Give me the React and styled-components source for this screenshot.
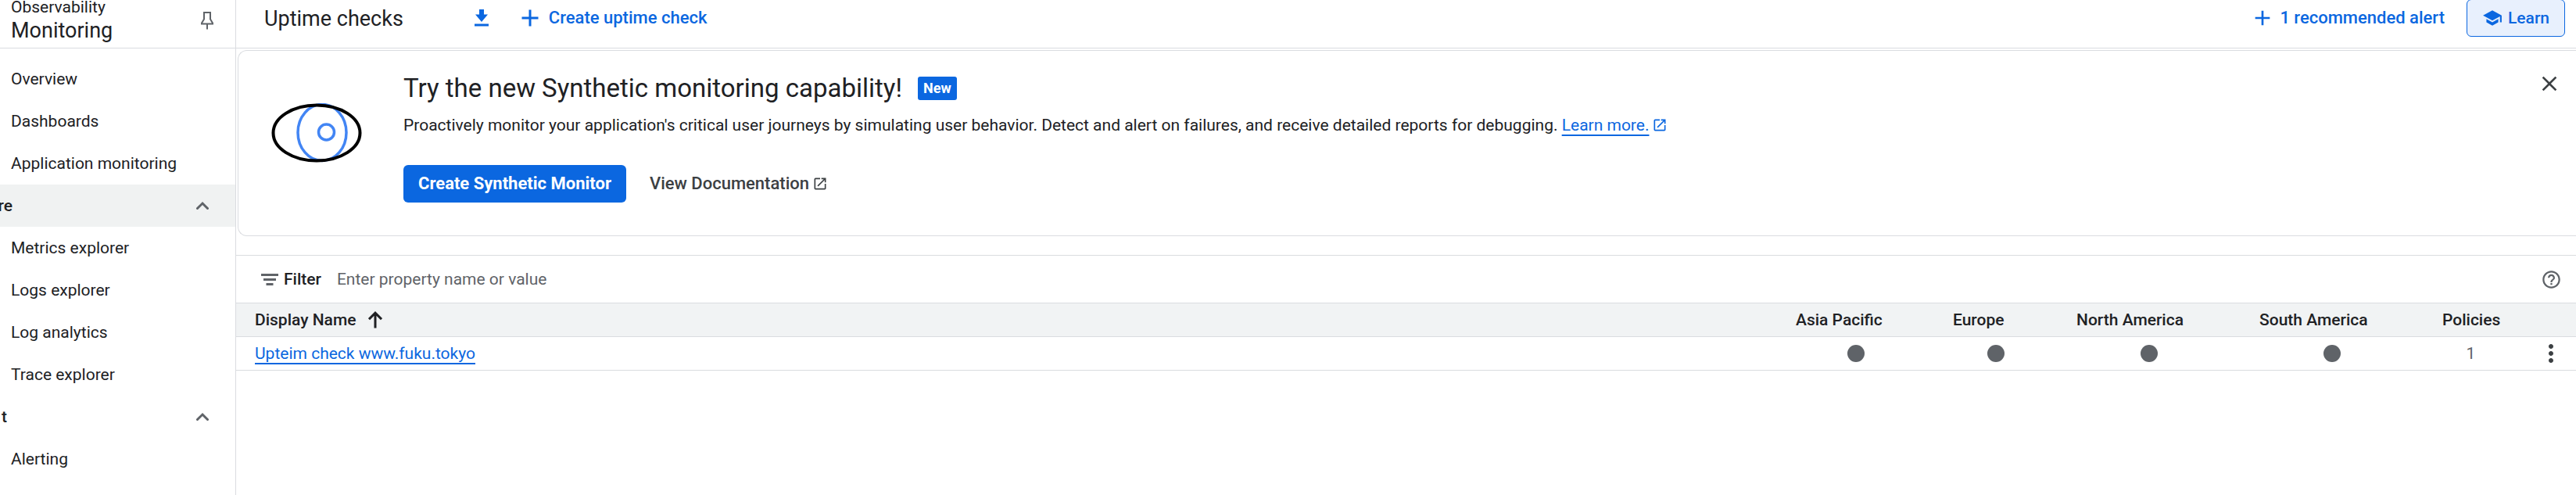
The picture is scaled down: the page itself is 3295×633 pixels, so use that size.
import React from "react";
import styled, { createGlobalStyle } from "styled-components";
import {
  MdAdd,
  MdClose,
  MdHelpOutline,
  MdMoreVert,
  MdOpenInNew,
  MdSchool,
} from "react-icons/md";

const blue = "#0b67e0";
const line = "#dadce0";
const ink = "#202124";
const grey = "#5f6368";

const navItems = [
  { label: "Overview" },
  { label: "Dashboards" },
  { label: "Application monitoring" },
  { label: "re", section: true, active: true, clip: 16 },
  { label: "Metrics explorer" },
  { label: "Logs explorer" },
  { label: "Log analytics" },
  { label: "Trace explorer" },
  { label: "t", section: true, clip: 9 },
  { label: "Alerting" },
];

const columns = [
  { label: "Asia Pacific", width: 201 },
  { label: "Europe", width: 158 },
  { label: "North America", width: 234 },
  { label: "South America", width: 234 },
];

const PinIcon = () => (
  <svg width="18" height="24" viewBox="0 0 18 24" fill="none" stroke={grey} strokeWidth="2">
    <path d="M4 2h10M5 2v8.5L2 15.5v1h14v-1L13 10.5V2M9 16.5v7" />
  </svg>
);

const ChevronUp = () => (
  <svg width="16" height="12" viewBox="0 0 16 12" fill="none" stroke={grey} strokeWidth="3">
    <path d="M1.5 9.5L8 3l6.5 6.5" strokeLinecap="round" />
  </svg>
);

const DownloadIcon = () => (
  <svg width="20" height="22" viewBox="0 0 20 22" fill={blue}>
    <path d="M7 0h6v6.500h5L10 16 2 6.500h5zM1 18.500h18V21.500H1z" />
  </svg>
);

const FilterIcon = () => (
  <svg width="22" height="15" viewBox="0 0 22 15" fill={grey}>
    <path d="M0 0h22v3H0zM3 6h16v3H3zM6.500 12h9v3h-9z" />
  </svg>
);

const ArrowUp = () => (
  <svg width="18" height="22" viewBox="0 0 18 22" fill="none" stroke={ink} strokeWidth="3">
    <path d="M9 21.500V2.500M1 10.200L9 2.200l8 8" />
  </svg>
);

const EyeArt = () => (
  <svg width="116" height="76" viewBox="0 0 116 76" fill="none">
    <ellipse cx="65" cy="37.500" rx="31" ry="36" stroke="#4285f4" strokeWidth="3.500" />
    <circle cx="70.500" cy="37" r="10" stroke="#4285f4" strokeWidth="3.500" />
    <ellipse cx="58" cy="38" rx="55.500" ry="35.500" stroke="#000" strokeWidth="4" />
  </svg>
);

const App = () => {
  return (
    <>
      <GlobalStyle />
      <Layout>
        <Sidebar>
          <SideHeader>
            <div>
              <Product>Observability</Product>
              <Service>Monitoring</Service>
            </div>
            <PlainButton type="button" aria-label="Pin navigation">
              <PinIcon />
            </PlainButton>
          </SideHeader>
          <NavList>
            {navItems.map((item) => (
              <li key={item.label}>
                {item.section ? (
                  <SectionButton type="button" $active={item.active}>
                    <SectionLabel $clip={item.clip}>{item.label}</SectionLabel>
                    <ChevronUp />
                  </SectionButton>
                ) : (
                  <NavLink href="#">{item.label}</NavLink>
                )}
              </li>
            ))}
          </NavList>
        </Sidebar>

        <Main>
          <TopBar>
            <PageTitle>Uptime checks</PageTitle>
            <PlainButton type="button" aria-label="Download">
              <DownloadIcon />
            </PlainButton>
            <ActionButton type="button">
              <MdAdd size={36} />
              Create uptime check
            </ActionButton>
            <Spacer />
            <ActionButton type="button">
              <MdAdd size={32} />1 recommended alert
            </ActionButton>
            <LearnButton type="button">
              <MdSchool size={26} />
              Learn
            </LearnButton>
          </TopBar>

          <Banner>
            <EyeArt />
            <BannerBody>
              <BannerTitle>
                Try the new Synthetic monitoring capability!
                <Badge>New</Badge>
              </BannerTitle>
              <BannerText>
                Proactively monitor your application's critical user journeys by
                simulating user behavior. Detect and alert on failures, and
                receive detailed reports for debugging.{" "}
                <TextLink href="#">Learn more.</TextLink>
                <MdOpenInNew size={20} color={blue} />
              </BannerText>
              <BannerActions>
                <PrimaryButton type="button">Create Synthetic Monitor</PrimaryButton>
                <DocLink href="#">
                  View Documentation
                  <MdOpenInNew size={20} />
                </DocLink>
              </BannerActions>
            </BannerBody>
            <PlainButton type="button" aria-label="Close">
              <MdClose size={32} />
            </PlainButton>
          </Banner>

          <FilterBar>
            <FilterIcon />
            <FilterLabel htmlFor="filter">Filter</FilterLabel>
            <FilterInput id="filter" placeholder="Enter property name or value" />
            <PlainButton type="button" aria-label="Help">
              <MdHelpOutline size={27} color={grey} />
            </PlainButton>
          </FilterBar>

          <Table>
            <colgroup>
              <col />
              {columns.map((col) => (
                <Col key={col.label} $width={col.width} />
              ))}
              <Col $width={121} />
              <Col $width={74} />
            </colgroup>
            <thead>
              <tr>
                <th>
                  <SortLabel>
                    Display Name
                    <ArrowUp />
                  </SortLabel>
                </th>
                {columns.map((col) => (
                  <th key={col.label}>{col.label}</th>
                ))}
                <th>Policies</th>
                <td />
              </tr>
            </thead>
            <tbody>
              <tr>
                <td>
                  <TextLink href="#">Upteim check www.fuku.tokyo</TextLink>
                </td>
                {columns.map((col) => (
                  <StatusCell key={col.label}>
                    <Dot />
                  </StatusCell>
                ))}
                <CountCell>1</CountCell>
                <MenuCell>
                  <PlainButton type="button" aria-label="More actions">
                    <MdMoreVert size={36} />
                  </PlainButton>
                </MenuCell>
              </tr>
            </tbody>
          </Table>
        </Main>
      </Layout>
    </>
  );
};

export default App;

const GlobalStyle = createGlobalStyle`
  * {
    box-sizing: border-box;
  }
  body {
    margin: 0;
    background: #fff;
    color: ${ink};
    font-family: Roboto, "Liberation Sans", sans-serif;
    font-size: 21px;
    line-height: 28px;
  }
  button, input {
    font: inherit;
    color: inherit;
  }
  svg {
    flex: none;
  }
`;

const Layout = styled.div`
  display: grid;
  grid-template-columns: 302px minmax(0, 1fr);
  min-height: 100vh;
`;

const Sidebar = styled.nav`
  border-right: 1px solid ${line};
`;

const SideHeader = styled.div`
  display: flex;
  align-items: flex-end;
  justify-content: space-between;
  height: 62px;
  padding: 0 27px 4px 14px;
  border-bottom: 1px solid ${line};

  button {
    padding-bottom: 19px;
  }
`;

const Product = styled.div`
  line-height: 24px;
`;

const Service = styled.div`
  font-size: 27px;
  line-height: 36px;
`;

const PlainButton = styled.button`
  display: flex;
  align-items: center;
  justify-content: center;
  padding: 0;
  border: 0;
  background: none;
  color: #3c4043;
  cursor: pointer;
`;

const NavList = styled.ul`
  list-style: none;
  margin: 0;
  padding: 12px 0 0;
`;

const NavLink = styled.a`
  display: flex;
  align-items: center;
  height: 54px;
  padding-left: 14px;
  color: ${ink};
  text-decoration: none;
`;

const SectionButton = styled.button`
  display: flex;
  align-items: center;
  justify-content: space-between;
  width: 100%;
  height: 54px;
  padding: 0 34px 0 0;
  border: 0;
  background: ${(props) => (props.$active ? "#f0f2f2" : "none")};
  font-weight: 500;
`;

const SectionLabel = styled.span`
  display: flex;
  justify-content: flex-end;
  width: ${(props) => props.$clip}px;
  overflow: hidden;
`;

const Main = styled.main`
  min-width: 0;
`;

const TopBar = styled.header`
  display: flex;
  align-items: flex-end;
  height: 62px;
  padding: 0 14px 14px 36px;
  border-bottom: 1px solid ${line};

  > * {
    height: 48px;
  }
`;

const PageTitle = styled.h1`
  margin: 0;
  padding-right: 90px;
  font-size: 27px;
  font-weight: 400;
  line-height: 50px;
`;

const ActionButton = styled.button`
  display: flex;
  align-items: center;
  gap: 6px;
  margin: 0 28px 0 34px;
  padding: 0;
  border: 0;
  background: none;
  color: ${blue};
  font-size: 22px;
  font-weight: 500;
  white-space: nowrap;
`;

const Spacer = styled.div`
  flex: 1;
`;

const LearnButton = styled.button`
  display: flex;
  align-items: center;
  gap: 7px;
  padding: 0 19px;
  border: 1px solid ${blue};
  border-radius: 6px;
  background: #e8f0fd;
  color: ${blue};
  font-weight: 500;
`;

const Banner = styled.section`
  display: flex;
  align-items: flex-start;
  height: 238px;
  margin: 2px 0 24px 2px;
  padding: 26px 18px 0 42px;
  border: 1px solid ${line};
  border-right: 0;
  border-radius: 12px 0 0 12px;

  > svg {
    margin-top: 41px;
  }
`;

const BannerBody = styled.div`
  flex: 1;
  padding-left: 53px;
`;

const BannerTitle = styled.h2`
  display: flex;
  align-items: center;
  gap: 20px;
  margin: 0;
  font-size: 33px;
  font-weight: 400;
  line-height: 44px;
`;

const Badge = styled.span`
  padding: 0 7px;
  border-radius: 3px;
  background: ${blue};
  color: #fff;
  font-size: 18px;
  font-weight: 700;
  line-height: 30px;
`;

const BannerText = styled.p`
  display: flex;
  align-items: center;
  margin: 11px 0 37px;
  white-space: pre-wrap;

  svg {
    margin-left: 4px;
  }
`;

const TextLink = styled.a`
  color: ${blue};
  text-decoration: underline;
  text-decoration-thickness: 2px;
  text-underline-offset: 5px;
  text-decoration-skip-ink: none;
`;

const BannerActions = styled.div`
  display: flex;
  align-items: center;
  gap: 30px;
`;

const PrimaryButton = styled.button`
  height: 48px;
  padding: 0 19px;
  border: 0;
  border-radius: 6px;
  background: ${blue};
  color: #fff;
  font-size: 22px;
  font-weight: 700;
`;

const DocLink = styled.a`
  display: flex;
  align-items: center;
  gap: 4px;
  color: #3c4043;
  font-size: 22px;
  font-weight: 500;
  text-decoration: none;
`;

const FilterBar = styled.div`
  display: flex;
  align-items: center;
  height: 61px;
  padding: 0 18px 0 32px;
  border-top: 1px solid ${line};
`;

const FilterLabel = styled.label`
  margin-left: 7px;
  font-weight: 500;
`;

const FilterInput = styled.input`
  flex: 1;
  margin-left: 20px;
  padding: 0;
  border: 0;
  outline: 0;
  background: none;

  &::placeholder {
    color: ${grey};
    opacity: 1;
  }
`;

const Table = styled.table`
  width: 100%;
  border-collapse: collapse;
  table-layout: fixed;

  th,
  td {
    height: 43px;
    padding: 0 0 0 24px;
    border-bottom: 1px solid ${line};
    text-align: left;
    white-space: nowrap;
  }

  thead tr {
    border-top: 1px solid ${line};
    background: #f1f3f4;
  }

  th {
    font-weight: 500;
  }
`;

const Col = styled.col`
  width: ${(props) => props.$width}px;
`;

const SortLabel = styled.span`
  display: flex;
  align-items: center;
  gap: 16px;
`;

const StatusCell = styled.td`
  && {
    padding: 0;
  }
`;

const Dot = styled.div`
  width: 22px;
  height: 22px;
  margin: 0 auto;
  border-radius: 50%;
  background: ${grey};
`;

const CountCell = styled.td`
  && {
    padding: 0;
    color: ${grey};
    text-align: center;
  }
`;

const MenuCell = styled.td`
  && {
    padding: 0 14px 0 24px;
  }
`;
